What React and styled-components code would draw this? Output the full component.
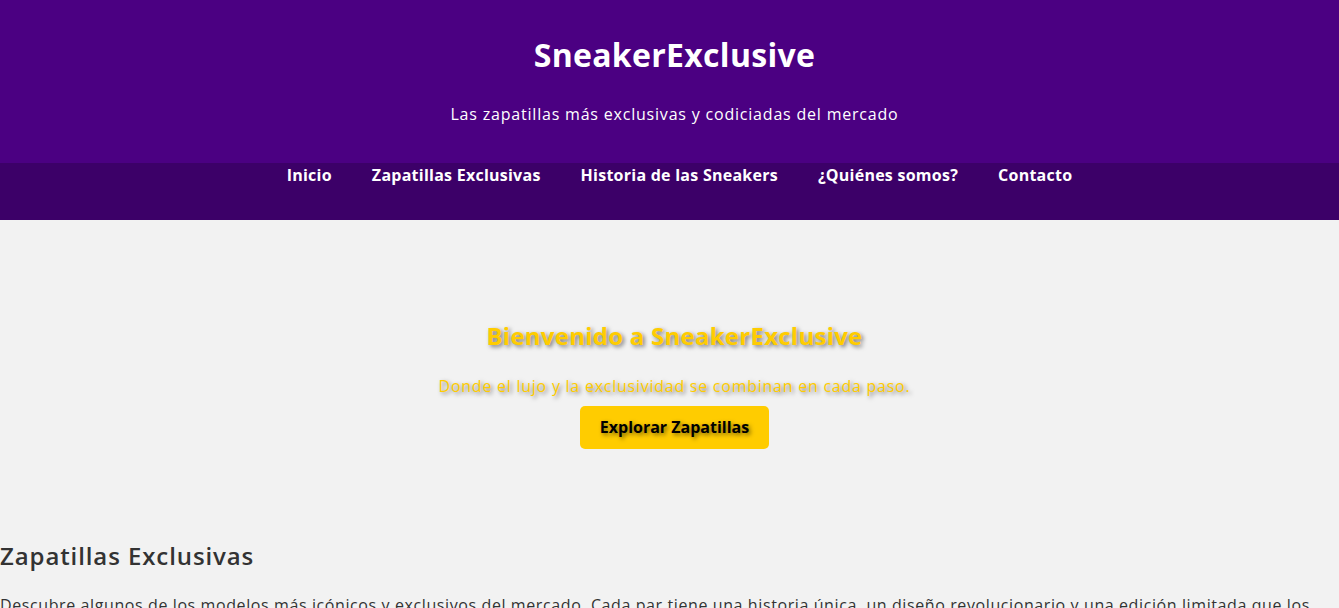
import React from "react";
import styled, { createGlobalStyle } from "styled-components";

const GlobalStyle = createGlobalStyle`
  body {
    margin: 0;
    background: #f2f2f2;
    font-family: "Open Sans", "DejaVu Sans", sans-serif;
    color: #333;
  }
`;

const links = [
  "Inicio",
  "Zapatillas Exclusivas",
  "Historia de las Sneakers",
  "¿Quiénes somos?",
  "Contacto",
];

function App() {
  return (
    <>
      <GlobalStyle />
      <Header>
        <Title>SneakerExclusive</Title>
        <Tagline>Las zapatillas más exclusivas y codiciadas del mercado</Tagline>
      </Header>
      <Nav>
        <NavList>
          {links.map((l) => (
            <li key={l}>
              <NavLink href="#">{l}</NavLink>
            </li>
          ))}
        </NavList>
      </Nav>
      <Hero>
        <HeroTitle>Bienvenido a SneakerExclusive</HeroTitle>
        <HeroText>Donde el lujo y la exclusividad se combinan en cada paso.</HeroText>
        <HeroButton>Explorar Zapatillas</HeroButton>
      </Hero>
      <Section>
        <SectionTitle>Zapatillas Exclusivas</SectionTitle>
        <SectionText>
          Descubre algunos de los modelos más icónicos y exclusivos del mercado. Cada par
          tiene una historia única, un diseño revolucionario y una edición limitada que los
          convierte en verdaderas piezas de colección.
        </SectionText>
      </Section>
    </>
  );
}

export default App;

const Header = styled.header`
  background: #4b0082;
  color: white;
  text-align: center;
  padding: 33px 0 37px 10px;
`;

const Title = styled.h1`
  margin: 0;
  font-size: 32px;
  line-height: 44px;
  font-weight: 700;
  letter-spacing: 0.3px;
`;

const Tagline = styled.p`
  margin: 25px 0 0;
  font-size: 16px;
  line-height: 24px;
  letter-spacing: 0.8px;
`;

const Nav = styled.nav`
  background: #3c0068;
  height: 57px;
`;

const NavList = styled.ul`
  list-style: none;
  margin: 0;
  padding: 0 0 0 20px;
  display: flex;
  justify-content: center;
  gap: 40px;
`;

const NavLink = styled.a`
  color: white;
  text-decoration: none;
  font-weight: 700;
  font-size: 16px;
  line-height: 24px;
  letter-spacing: 0.25px;
`;

const Hero = styled.section`
  display: flex;
  flex-direction: column;
  align-items: center;
  text-align: center;
  padding: 98px 0 70px 10px;
  color: #ffcc00;
  text-shadow: 2px 2px 4px rgba(0, 0, 0, 0.5);
`;

const HeroTitle = styled.h2`
  margin: 0;
  font-size: 24px;
  line-height: 36px;
  font-weight: 700;
  letter-spacing: 0.25px;
`;

const HeroText = styled.p`
  margin: 20px 0 8px;
  font-size: 16px;
  line-height: 24px;
  letter-spacing: 0.75px;
`;

const HeroButton = styled.button`
  background: #ffcc00;
  color: black;
  border: none;
  border-radius: 5px;
  padding: 10px 20px;
  font-family: inherit;
  font-size: 16px;
  line-height: 23px;
  font-weight: 700;
  text-shadow: inherit;
  cursor: pointer;
`;

const Section = styled.section`
  padding: 0;
`;

const SectionTitle = styled.h2`
  margin: 19px 0 0;
  font-size: 24px;
  line-height: 36px;
  font-weight: 600;
  letter-spacing: 0.9px;
  color: #333;
`;

const SectionText = styled.p`
  margin: 19px 0 0;
  font-size: 16px;
  line-height: 24px;
  letter-spacing: 0.6px;
`;
